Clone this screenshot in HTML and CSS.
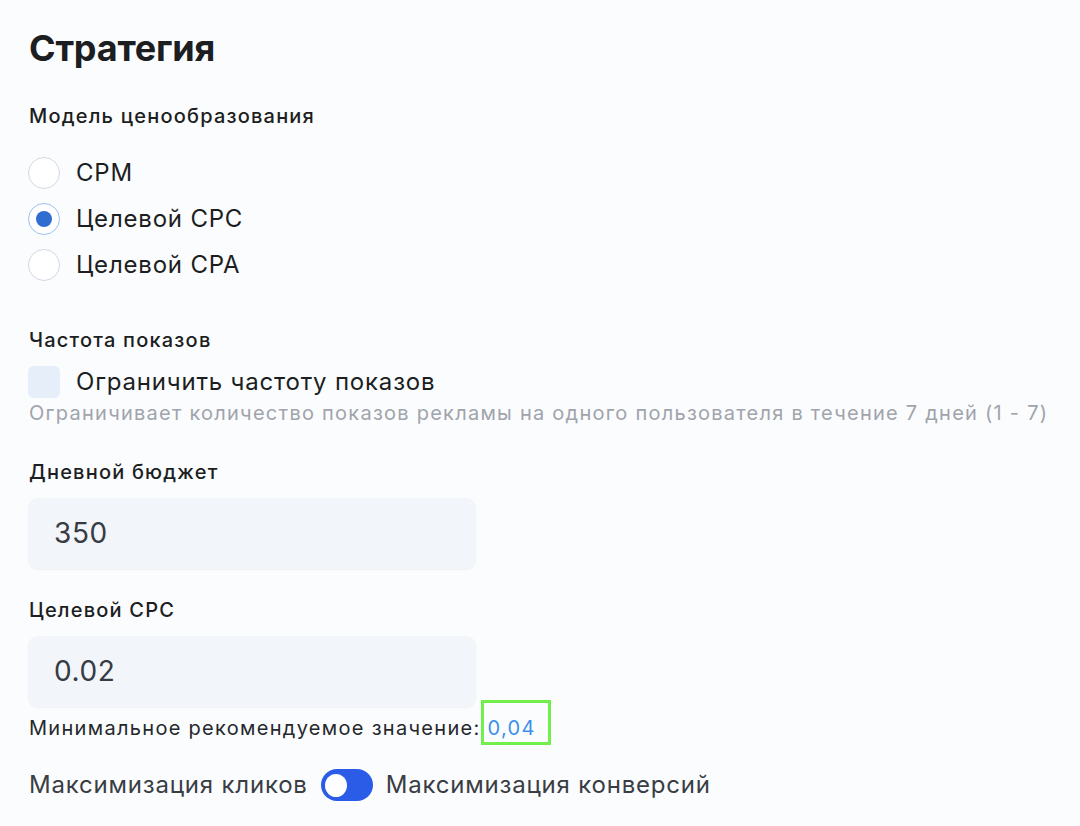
FILE: index.html
```html
<!DOCTYPE html>
<html lang="ru">
<head>
    <meta charset="UTF-8">
    <title>Стратегия</title>
    <link rel="stylesheet" href="styles.css">
</head>
<body>
<div class="strategy">
    <h1 class="strategy-title">Стратегия</h1>

    <!--модель ценообразования-->
    <div class="field">
        <div class="field-label">Модель ценообразования</div>
        <div class="radio-list">
            <label class="radio"><span class="radio-dot"></span>CPM</label>
            <label class="radio"><span class="radio-dot checked"></span>Целевой CPC</label>
            <label class="radio"><span class="radio-dot"></span>Целевой CPA</label>
        </div>
    </div>

    <!--частота показов-->
    <div class="field field-freq">
        <div class="field-label">Частота показов</div>
        <label class="checkbox"><span class="checkbox-box"></span>Ограничить частоту показов</label>
        <div class="field-hint">Ограничивает количество показов рекламы на одного пользователя в течение 7 дней (1 - 7)</div>
    </div>

    <div class="field field-budget">
        <div class="field-label">Дневной бюджет</div>
        <div class="input">350</div>
    </div>

    <div class="field field-cpc">
        <div class="field-label">Целевой CPC</div>
        <div class="input">0.02</div>
        <div class="field-min">Минимальное рекомендуемое значение:<span class="field-min-value">0,04</span></div>
    </div>

    <div class="switch-row">
        <span>Максимизация кликов</span>
        <span class="switch"><span class="switch-knob"></span></span>
        <span>Максимизация конверсий</span>
    </div>
</div>
</body>
</html>
```

FILE: styles.css
```css
* {
    margin: 0;
    padding: 0;
    box-sizing: border-box;
}

body {
    background-color: #fbfcfe;
    font-family: Inter, "Noto Sans", sans-serif;
    color: #1c1e21;
}

.strategy {
    padding: 24px 28px 0 28px;
}

.strategy-title {
    font-size: 36px;
    font-weight: 700;
    line-height: 48px;
    letter-spacing: -0.2px;
    margin-left: 1px;
}

.field-label {
    font-size: 20px;
    font-weight: 500;
    line-height: 28px;
    letter-spacing: 1.2px;
    margin-left: 1px;
}

.field {
    margin-top: 30px;
}

.radio-list {
    margin-top: 27px;
    display: flex;
    flex-direction: column;
    gap: 14px;
}

.radio,
.checkbox {
    display: flex;
    align-items: center;
    font-size: 24px;
    line-height: 32px;
    letter-spacing: 0.8px;
    gap: 16px;
}

.radio-dot {
    width: 32px;
    height: 32px;
    border-radius: 50%;
    border: 1px solid #d3d9e3;
    background-color: #fff;
    display: flex;
    align-items: center;
    justify-content: center;
}

.radio-dot.checked {
    border-color: #9cc1ee;
}

.radio-dot.checked::after {
    content: "";
    width: 16px;
    height: 16px;
    border-radius: 50%;
    background-color: #2f6dd0;
}

.field-freq {
    margin-top: 45px;
}

.checkbox {
    margin-top: 12px;
}

.checkbox-box {
    width: 32px;
    height: 32px;
    border-radius: 6px;
    background-color: #e5eef9;
}

.field-hint {
    margin-top: 1px;
    font-size: 20px;
    line-height: 28px;
    letter-spacing: 1.25px;
    color: #a0a4ab;
    margin-left: 1px;
}

.field-budget {
    margin-top: 31px;
}

.input {
    margin-top: 12px;
    width: 448px;
    height: 71px;
    border-radius: 10px;
    background-color: #f2f5f9;
    box-shadow: 0 1px 2px rgba(40, 60, 100, 0.06);
    font-size: 28px;
    line-height: 71px;
    letter-spacing: 0.6px;
    padding-left: 26px;
    color: #363b44;
}

.field-cpc {
    margin-top: 27px;
}

.field-min {
    margin-top: 7px;
    font-size: 20px;
    line-height: 28px;
    letter-spacing: 1.3px;
    color: #25282c;
    margin-left: 1px;
}

.field-min-value {
    position: relative;
    color: #3d90e8;
    margin-left: 7px;
}

/*подсветка значения*/
.field-min-value::after {
    content: "";
    position: absolute;
    left: -7px;
    right: -15px;
    top: -16px;
    bottom: -5px;
    border: 3px solid #71f04c;
}

.switch-row {
    margin-top: 27px;
    display: flex;
    align-items: center;
    gap: 13px;
    font-size: 24px;
    line-height: 32px;
    letter-spacing: 0.8px;
    color: #393d44;
    margin-left: 1px;
}

.switch {
    width: 52px;
    height: 32px;
    border-radius: 16px;
    background-color: #2a5ce8;
    display: flex;
    align-items: center;
    padding-left: 4px;
}

.switch-knob {
    width: 22px;
    height: 23px;
    border-radius: 50%;
    background-color: #fff;
}
```
